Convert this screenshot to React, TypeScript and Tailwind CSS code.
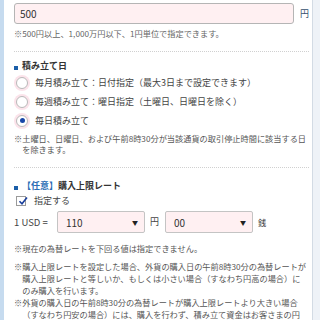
import React from "react";

const font = { fontFamily: '"Noto Sans CJK JP", "Noto Sans", sans-serif' };

function Radio({ checked }: { checked?: boolean }) {
  return (
    <span className="flex h-[12px] w-[12px] shrink-0 items-center justify-center rounded-full border border-[#b9b9b9] bg-white shadow-[0_0_0_2px_#fbe3ea]">
      {checked && <span className="h-[5px] w-[5px] rounded-full bg-[#1846a8]" />}
    </span>
  );
}

function Select({ value }: { value: string }) {
  return (
    <div className="flex h-[22px] w-[88px] items-center justify-between rounded-[2px] border border-[#c4c4c4] bg-[#fff0f2] pl-[8px] pr-[6px] text-[10px] text-[#333]">
      <span>{value}</span>
      <span className="text-[6px] text-[#222]">▼</span>
    </div>
  );
}

function Heading({ children }: { children: React.ReactNode }) {
  return (
    <div className="flex h-[14px] items-center gap-[4px] text-[9px] font-bold text-[#333]">
      <span className="mt-[3px] h-[4px] w-[4px] bg-[#1b5ea8]" />
      <span>{children}</span>
    </div>
  );
}

export default function App() {
  const options = [
    { label: "毎月積み立て：日付指定（最大3日まで設定できます）" },
    { label: "毎週積み立て：曜日指定（土曜日、日曜日を除く）" },
    { label: "毎日積み立て", checked: true },
  ];

  return (
    <div className="flex h-[320px] w-[320px] overflow-hidden bg-[#eef2f7]" style={font}>
      <div className="w-[4px] shrink-0 bg-[#c6dbef]" />
      <div className="w-[309px] shrink-0 border-r border-[#d3dbe4] bg-white pl-[10px] pr-[3px] pt-[3px]">
        <div className="flex items-center">
          <div className="flex h-[21px] w-[283px] items-center rounded-[3px] border border-[#b5b5b5] bg-[#fff0f2] pl-[5px] text-[10px] text-[#333]">
            500
          </div>
          <span className="ml-[6px] text-[9px] text-[#35506e]">円</span>
        </div>
        <p className="mt-[3px] whitespace-nowrap text-[8.2px] leading-[12px] text-[#666]">
          ※500円以上、1,000万円以下、1円単位で指定できます。
        </p>
        <div className="mt-[12px] border-t border-dotted border-[#d0d0d0]" />

        <div className="mt-[7px]">
          <Heading>積み立て日</Heading>
        </div>
        <div className="mt-[3px] flex flex-col gap-[6px] pl-[2px]">
          {options.map((o) => (
            <div key={o.label} className="flex h-[13px] items-center gap-[7px] whitespace-nowrap text-[9px] text-[#444]">
              <Radio checked={o.checked} />
              <span>{o.label}</span>
            </div>
          ))}
        </div>
        <div className="mt-[6px] whitespace-nowrap text-[8.2px] leading-[11px] text-[#555]">
          <p>※土曜日、日曜日、および午前8時30分が当該通貨の取引停止時間に該当する日</p>
          <p className="pl-[8.2px]">を除きます。</p>
        </div>
        <div className="mt-[12px] border-t border-dotted border-[#d0d0d0]" />

        <div className="mt-[11px]">
          <Heading>
            <span className="text-[#2a6cb5]">【任意】</span>購入上限レート
          </Heading>
        </div>
        <div className="mt-[1px] flex h-[14px] items-center gap-[8px] pl-[2px] text-[9px] text-[#444]">
          <span className="relative flex h-[10px] w-[10px] items-center justify-center border border-[#9a9a9a] bg-white">
            <svg viewBox="0 0 10 10" className="absolute left-[1px] top-[-1px] h-[10px] w-[10px]">
              <path d="M1.5 5.2 L4 7.8 L9 1.5" fill="none" stroke="#1a3f9c" strokeWidth="1.6" />
            </svg>
          </span>
          <span>指定する</span>
        </div>
        <div className="mt-[3px] flex items-center text-[9.5px] text-[#444]">
          <span className="w-[43px]">1 USD =</span>
          <Select value="110" />
          <span className="ml-[5px] w-[10px] text-[9px]">円</span>
          <span className="ml-[5px]">
            <Select value="00" />
          </span>
          <span className="ml-[5px] text-[8.2px]">銭</span>
        </div>
        <p className="mt-[9px] whitespace-nowrap text-[8.2px] leading-[12px] text-[#555]">
          ※現在の為替レートを下回る値は指定できません。
        </p>
        <div className="mt-[6px] whitespace-nowrap text-[8.2px] leading-[12px] text-[#555]">
          <p>※購入上限レートを設定した場合、外貨の購入日の午前8時30分の為替レートが</p>
          <p className="pl-[8.2px]">購入上限レートと等しいか、もしくは小さい場合（すなわち円高の場合）に</p>
          <p className="pl-[8.2px]">のみ購入を行います。</p>
          <p>※外貨の購入日の午前8時30分の為替レートが購入上限レートより大きい場合</p>
          <p className="pl-[8.2px]">（すなわち円安の場合）には、購入を行わず、積み立て資金はお客さまの円</p>
        </div>
      </div>
    </div>
  );
}
